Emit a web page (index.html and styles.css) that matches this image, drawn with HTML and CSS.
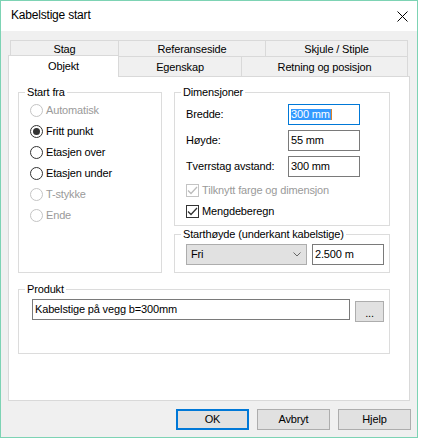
FILE: index.html
```html
<!DOCTYPE html>
<html lang="no">
<head>
<meta charset="utf-8">
<title>Kabelstige start</title>
<link rel="stylesheet" href="styles.css">
</head>
<body>
<div class="window">
  <div class="titlebar">
    <span class="title">Kabelstige start</span>
    <svg class="close" width="11" height="11" viewBox="0 0 11 11"><path d="M0.5 0.5 L10.5 10.5 M10.5 0.5 L0.5 10.5" stroke="#000" stroke-width="1" fill="none"/></svg>
  </div>
  <div class="content">
    <div class="tabrow1">
      <div class="tab t-stag">Stag</div>
      <div class="tab t-ref">Referanseside</div>
      <div class="tab t-skj">Skjule / Stiple</div>
    </div>
    <div class="tabrow2">
      <div class="tab2 t-obj active">Objekt</div>
      <div class="tab2 t-egn">Egenskap</div>
      <div class="tab2 t-ret">Retning og posisjon</div>
    </div>
    <div class="panel">
      <div class="toprow">
        <fieldset class="grp startfra">
          <legend>Start fra</legend>
          <div class="radios">
            <div class="radio disabled"><span class="circle"></span>Automatisk</div>
            <div class="radio"><span class="circle checked"><span class="dot"></span></span>Fritt punkt</div>
            <div class="radio"><span class="circle"></span>Etasjen over</div>
            <div class="radio"><span class="circle"></span>Etasjen under</div>
            <div class="radio disabled"><span class="circle"></span>T-stykke</div>
            <div class="radio disabled"><span class="circle"></span>Ende</div>
          </div>
        </fieldset>
        <div class="rightcol">
          <fieldset class="grp dim">
            <legend>Dimensjoner</legend>
            <div class="diminner">
              <div class="dimgrid">
                <span class="lbl">Bredde:</span>
                <div class="field focus"><span class="sel">300 mm</span><span class="caret"></span></div>
                <span class="lbl">Høyde:</span>
                <div class="field">55 mm</div>
                <span class="lbl">Tverrstag avstand:</span>
                <div class="field">300 mm</div>
              </div>
              <div class="checks">
                <div class="check disabled"><span class="box"><svg width="11" height="11" viewBox="0 0 11 11"><path d="M1 5.5 L4 8.5 L10 2" stroke="#bcbcbc" stroke-width="1.3" fill="none"/></svg></span>Tilknytt farge og dimensjon</div>
                <div class="check"><span class="box"><svg width="11" height="11" viewBox="0 0 11 11"><path d="M1 5.5 L4 8.5 L10 2" stroke="#333" stroke-width="1.3" fill="none"/></svg></span>Mengdeberegn</div>
              </div>
            </div>
          </fieldset>
          <fieldset class="grp start">
            <legend>Starthøyde (underkant kabelstige)</legend>
            <div class="startrow">
              <div class="select"><span>Fri</span><svg width="8" height="5" viewBox="0 0 8 5"><path d="M0.5 0.5 L4 4 L7.5 0.5" stroke="#666" stroke-width="1" fill="none"/></svg></div>
              <div class="field small">2.500 m</div>
            </div>
          </fieldset>
        </div>
      </div>
      <fieldset class="grp produkt">
        <legend>Produkt</legend>
        <div class="prodrow">
          <div class="field prod">Kabelstige på vegg b=300mm</div>
          <div class="btn dots">...</div>
        </div>
      </fieldset>
    </div>
    <div class="buttons">
      <div class="btn big ok">OK</div>
      <div class="btn big">Avbryt</div>
      <div class="btn big">Hjelp</div>
    </div>
  </div>
</div>
</body>
</html>
```
FILE: styles.css
```css
* { box-sizing: border-box; margin: 0; padding: 0; }
body {
  background: #fff;
  font-family: "Liberation Sans", Arial, sans-serif;
  font-size: 11px;
  letter-spacing: -0.15px;
  line-height: 13px;
  color: #000;
}
.window {
  width: 418px;
  height: 438px;
  border: 1px solid #7dd3b4;
  background: #f0f0f0;
  display: flex;
  flex-direction: column;
}
.titlebar {
  flex: none;
  height: 30px;
  background: #fff;
  display: flex;
  align-items: center;
  justify-content: space-between;
  padding: 0 9px 0 10px;
  font-size: 12px;
  letter-spacing: -0.2px;
}
.title { padding-bottom: 1px; }
.content {
  padding: 9px 0 0 7px;
  display: flex;
  flex-direction: column;
}
.tabrow1 {
  display: flex;
  height: 17px;
  margin-left: 2px;
}
.tab {
  height: 17px;
  border: 1px solid #d9d9d9;
  background: #f0f0f0;
  text-align: center;
  padding-top: 2px;
}
.tab + .tab { margin-left: -1px; }
.t-stag { width: 109px; }
.t-ref { width: 148px; }
.t-skj { width: 143px; }
.tabrow2 {
  display: flex;
  height: 19px;
  align-items: flex-start;
}
.tab2 {
  height: 19px;
  border-left: 1px solid #d9d9d9;
  border-right: 1px solid #d9d9d9;
  background: #f0f0f0;
  text-align: center;
  padding-top: 4px;
}
.tab2 + .tab2 { margin-left: -1px; }
.t-obj { width: 111px; }
.t-egn { width: 124px; }
.t-ret { width: 167px; }
.tab2.active {
  position: relative;
  z-index: 1;
  height: 22px;
  margin-top: -2px;
  border-top: 1px solid #d9d9d9;
  background: #fff;
  padding-top: 4px;
}
.panel {
  width: 402px;
  height: 325px;
  border: 1px solid #d9d9d9;
  background: #fff;
  padding: 9px 0 0 9px;
}
.toprow {
  display: grid;
  grid-template-columns: 144px 216px;
  column-gap: 12px;
}
fieldset.grp {
  border: 1px solid #dcdcdc;
  min-width: 0;
  padding: 0;
}
legend {
  margin-left: 6px;
  padding: 0 2px;
  line-height: 13px;
}
.startfra { height: 187px; }
.radios { padding: 1px 0 0 11px; }
.radio {
  height: 21px;
  display: flex;
  align-items: center;
}
.circle {
  width: 13px;
  height: 13px;
  border-radius: 50%;
  border: 1px solid #333;
  background: #fff;
  margin-right: 3px;
  display: flex;
  align-items: center;
  justify-content: center;
}
.dot {
  width: 7px;
  height: 7px;
  border-radius: 50%;
  background: #333;
}
.radio.disabled { color: #9a9a9a; }
.radio.disabled .circle { border-color: #c4c4c4; }
.rightcol {
  display: flex;
  flex-direction: column;
  gap: 2px;
}
.dim { height: 140px; }
.diminner { padding: 5px 0 0 11px; }
.dimgrid {
  display: grid;
  grid-template-columns: 102px 72px;
  grid-auto-rows: 21px;
  row-gap: 5px;
  align-items: center;
}
.field {
  height: 21px;
  border: 1px solid #7a7a7a;
  background: #fff;
  padding-left: 2px;
  display: flex;
  align-items: center;
  white-space: nowrap;
}
.field.focus { border-color: #0078d7; }
.sel {
  background: #3399ff;
  color: #fff;
  line-height: 11px;
  height: 11px;
  padding-right: 1px;
}
.caret {
  width: 1px;
  height: 11px;
  background: #d9822b;
}
.checks { margin-top: 3px; }
.check {
  height: 21px;
  display: flex;
  align-items: center;
}
.box {
  width: 13px;
  height: 13px;
  border: 1px solid #333;
  background: #fff;
  margin-right: 3px;
  display: flex;
}
.check.disabled { color: #9a9a9a; }
.check.disabled .box { border-color: #c4c4c4; }
.start { height: 45px; }
.startrow {
  display: flex;
  gap: 5px;
  padding: 3px 0 0 11px;
}
.select {
  width: 121px;
  height: 21px;
  border: 1px solid #adadad;
  background: #e1e1e1;
  display: flex;
  align-items: center;
  justify-content: space-between;
  padding: 0 5px 0 4px;
}
.field.small { width: 72px; }
.produkt {
  width: 372px;
  height: 71px;
  margin-top: 10px;
}
.prodrow {
  display: flex;
  gap: 5px;
  align-items: flex-start;
  padding: 3px 0 0 13px;
}
.field.prod { width: 318px; }
.btn {
  border: 1px solid #adadad;
  background: #e1e1e1;
  display: flex;
  align-items: center;
  justify-content: center;
}
.btn.dots {
  width: 29px;
  height: 21px;
  margin-top: 2px;
  padding-top: 3px;
}
.buttons {
  display: flex;
  justify-content: flex-end;
  gap: 8px;
  margin-top: 8px;
  padding-right: 6px;
}
.btn.big { width: 73px; height: 21px; }
.btn.ok { border: 2px solid #0078d7; }
```
